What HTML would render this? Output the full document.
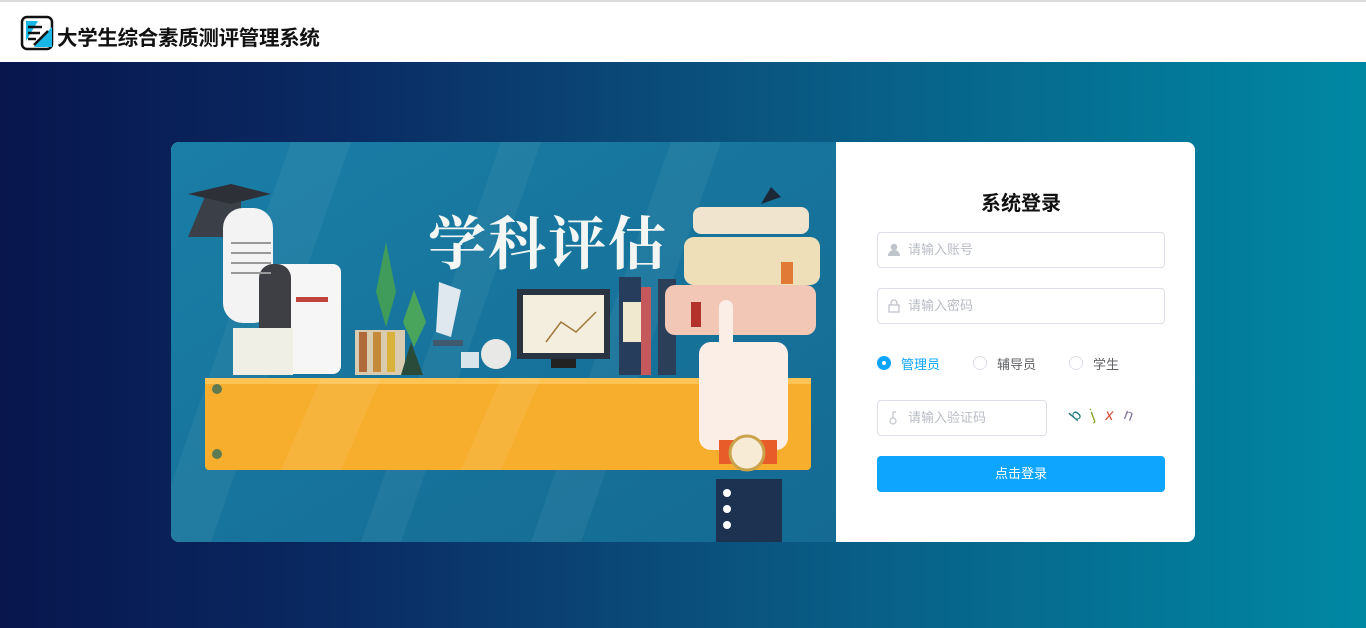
<!DOCTYPE html>
<html><head><meta charset="utf-8"><style>
*{margin:0;padding:0;box-sizing:border-box}
body{width:1366px;height:628px;overflow:hidden;font-family:"Liberation Sans","Noto Sans CJK SC",sans-serif;background:#fff}
.top{position:absolute;left:0;top:0;width:1366px;height:62px;background:#fff;border-top:2px solid #dcdcdc}
.title{position:absolute;left:57px;top:19px;font-size:20.5px;font-weight:bold;color:#111;letter-spacing:-0.3px}
.bg{position:absolute;left:0;top:62px;width:1366px;height:566px;background:linear-gradient(90deg,#08164d 0%,#0a2a63 25%,#0a5580 55%,#0088a3 100%)}
.card{position:absolute;left:171px;top:142px;width:1024px;height:400px;border-radius:8px;overflow:hidden;background:#fff}
.form{position:absolute;left:665px;top:0;width:359px;height:400px}
.h{position:absolute;left:0;width:370px;top:45px;text-align:center;font-size:20px;font-weight:bold;color:#111}
.inp{position:absolute;left:41px;width:288px;height:36px;border:1px solid #dcdfe6;border-radius:4px;font-size:13px;color:#b8bcc4;padding-left:30px;line-height:34px}
.inp svg{position:absolute;left:10px;top:10px}
.radio{position:absolute;top:212px;font-size:13px;color:#606266}
.radio i{position:absolute;left:-24px;top:2px;width:14px;height:14px;border:1px solid #dcdfe6;border-radius:50%}
.btn{position:absolute;left:41px;top:314px;width:288px;height:36px;background:#0ea5ff;border-radius:4px;color:#fff;text-align:center;line-height:36px;font-size:13px}
</style></head><body>
<div class="top">
<svg style="position:absolute;left:20px;top:13px" width="36" height="36" viewBox="0 0 36 36"><rect x="2" y="2" width="30" height="32" rx="5" fill="none" stroke="#111" stroke-width="2.5"/><path d="M6 6h12l-12 20z" fill="#19b7e6"/><path d="M22 22l10-10v20h-18z" fill="#19b7e6"/><path d="M8 12h14M8 18h12M8 24h8M14 30l14-14" stroke="#111" stroke-width="2.5" fill="none"/></svg>
<div class="title">大学生综合素质测评管理系统</div>
</div>
<div class="bg"></div>
<div class="card">
<svg width="665" height="400" viewBox="0 0 665 400" style="position:absolute;left:0;top:0">
<defs><linearGradient id="g" x1="0" y1="0" x2="1" y2="1"><stop offset="0" stop-color="#1a7ea6"/><stop offset="1" stop-color="#146a92"/></linearGradient></defs>
<rect width="665" height="400" fill="url(#g)"/>
<path d="M120 0h60L40 400h-60z M330 0h40L230 400h-40z M500 0h50L410 400h-50z" fill="#fff" opacity="0.05"/>
<text x="257" y="122" font-family="Liberation Serif,'Noto Serif CJK SC',serif" font-weight="bold" font-size="58" fill="#f4f6f4" letter-spacing="2">学科评估</text>
<path d="M17 95 L35 52 H70 L70 95z" fill="#3b3f48"/>
<polygon points="17,52 60,42 100,52 60,62" fill="#2e3038"/>
<rect x="52" y="66" width="50" height="115" rx="20" fill="#f3f3f3"/>
<rect x="90" y="122" width="80" height="110" rx="8" fill="#f6f6f6"/>
<rect x="88" y="122" width="32" height="110" rx="14" fill="#3d3f45"/>
<rect x="62" y="186" width="60" height="47" fill="#f0efe6"/>
<rect x="125" y="155" width="32" height="5" fill="#c0443d"/>
<rect x="60" y="100" width="40" height="2" fill="#999"/><rect x="60" y="110" width="40" height="2" fill="#999"/><rect x="60" y="120" width="40" height="2" fill="#999"/><rect x="60" y="130" width="40" height="2" fill="#999"/>
<path d="M215 100 L225 150 L215 185 L205 150z" fill="#3f9c5a"/>
<path d="M243 148 L255 180 L243 205 L232 180z" fill="#4aa55c"/>
<rect x="184" y="188" width="50" height="45" fill="#d9cbb0"/>
<rect x="188" y="190" width="8" height="40" fill="#b06a3a"/><rect x="202" y="190" width="8" height="40" fill="#c48a3a"/><rect x="216" y="190" width="8" height="40" fill="#d8b23a"/>
<path d="M240 200 L252 233 H230z" fill="#2a4a3a"/>
<path d="M268 140 L290 148 L280 195 L265 190z" fill="#dfe8ee"/>
<rect x="262" y="198" width="30" height="6" fill="#3f5a6f"/>
<circle cx="325" cy="212" r="15" fill="#e8e8e6"/>
<rect x="290" y="210" width="18" height="16" fill="#d8e6ec"/>
<rect x="346" y="147" width="93" height="70" fill="#2a3440"/>
<rect x="352" y="153" width="81" height="58" fill="#f3eedd"/>
<path d="M375 200 L390 180 L405 190 L425 170" stroke="#a07a3a" fill="none" stroke-width="1.5"/>
<rect x="380" y="217" width="25" height="9" fill="#222"/>
<rect x="448" y="135" width="22" height="98" fill="#263e5c"/>
<rect x="452" y="160" width="18" height="40" fill="#f0e8cf"/>
<rect x="470" y="145" width="10" height="88" fill="#c4585a"/>
<rect x="487" y="137" width="18" height="96" fill="#2b3f59"/>
<rect x="522" y="65" width="116" height="27" rx="8" fill="#f0e4cf"/>
<rect x="513" y="95" width="136" height="48" rx="10" fill="#eedfb8"/>
<rect x="494" y="143" width="151" height="50" rx="10" fill="#f2c7b5"/>
<rect x="520" y="160" width="10" height="25" fill="#b3332c"/>
<rect x="610" y="120" width="12" height="22" fill="#e07a35"/>
<path d="M590 62 L600 45 L610 55z" fill="#1c2836"/>
<rect x="34" y="236" width="606" height="92" rx="4" fill="#f7ae2d"/>
<rect x="34" y="236" width="606" height="6" fill="#fbc454"/>
<path d="M150 236h60l-40 92h-60z M330 236h40l-40 92h-40z" fill="#fff" opacity="0.08"/>
<circle cx="46" cy="247" r="5" fill="#5e7a52"/><circle cx="46" cy="312" r="5" fill="#5e7a52"/>
<rect x="548" y="158" width="14" height="60" rx="7" fill="#fbeee6"/>
<rect x="528" y="200" width="89" height="108" rx="12" fill="#fbeee6"/>
<rect x="548" y="298" width="58" height="24" fill="#e85c2a"/>
<circle cx="576" cy="311" r="17" fill="#f7ebd6" stroke="#c9a24a" stroke-width="3"/>
<rect x="545" y="337" width="66" height="63" fill="#1c3250"/>
<circle cx="556" cy="351" r="4" fill="#fff"/><circle cx="556" cy="367" r="4" fill="#fff"/><circle cx="556" cy="383" r="4" fill="#fff"/>
</svg>
<div class="form">
<div class="h">系统登录</div>
<div class="inp" style="top:90px"><svg width="12" height="14" viewBox="0 0 12 14"><circle cx="6" cy="4" r="3.3" fill="#c0c4cc"/><path d="M0 13c0-4 3-6 6-6s6 2 6 6z" fill="#c0c4cc"/></svg>请输入账号</div>
<div class="inp" style="top:146px"><svg width="12" height="14" viewBox="0 0 12 14"><rect x="1" y="6" width="10" height="7" fill="none" stroke="#c0c4cc" stroke-width="1.3"/><path d="M3 6V4a3 3 0 016 0v2" fill="none" stroke="#c0c4cc" stroke-width="1.3"/></svg>请输入密码</div>
<div class="radio" style="left:65px;color:#0ea5ff"><i style="background:#0ea5ff;border-color:#0ea5ff"><b style="position:absolute;left:4px;top:4px;width:4px;height:4px;background:#fff;border-radius:50%"></b></i>管理员</div>
<div class="radio" style="left:161px"><i></i>辅导员</div>
<div class="radio" style="left:257px"><i></i>学生</div>
<div class="inp" style="top:258px;width:170px"><svg width="10" height="14" viewBox="0 0 10 14"><circle cx="5" cy="10" r="3" fill="none" stroke="#c0c4cc" stroke-width="1.2"/><path d="M5 7V1h3" fill="none" stroke="#c0c4cc" stroke-width="1.2"/></svg>请输入验证码</div>
<div style="position:absolute;left:236px;top:265px;font-size:16px">
<span style="color:#1f7a7a;display:inline-block;transform:rotate(-50deg)">b</span>
<span style="color:#8aaa2a;margin-left:6px;display:inline-block;transform:rotate(-20deg)">j</span>
<span style="color:#d84a3a;margin-left:6px;font-style:italic">x</span>
<span style="color:#8a7aa0;margin-left:6px;display:inline-block;transform:rotate(20deg)">n</span></div>
<div class="btn">点击登录</div>
</div>
</div>
</body></html>
